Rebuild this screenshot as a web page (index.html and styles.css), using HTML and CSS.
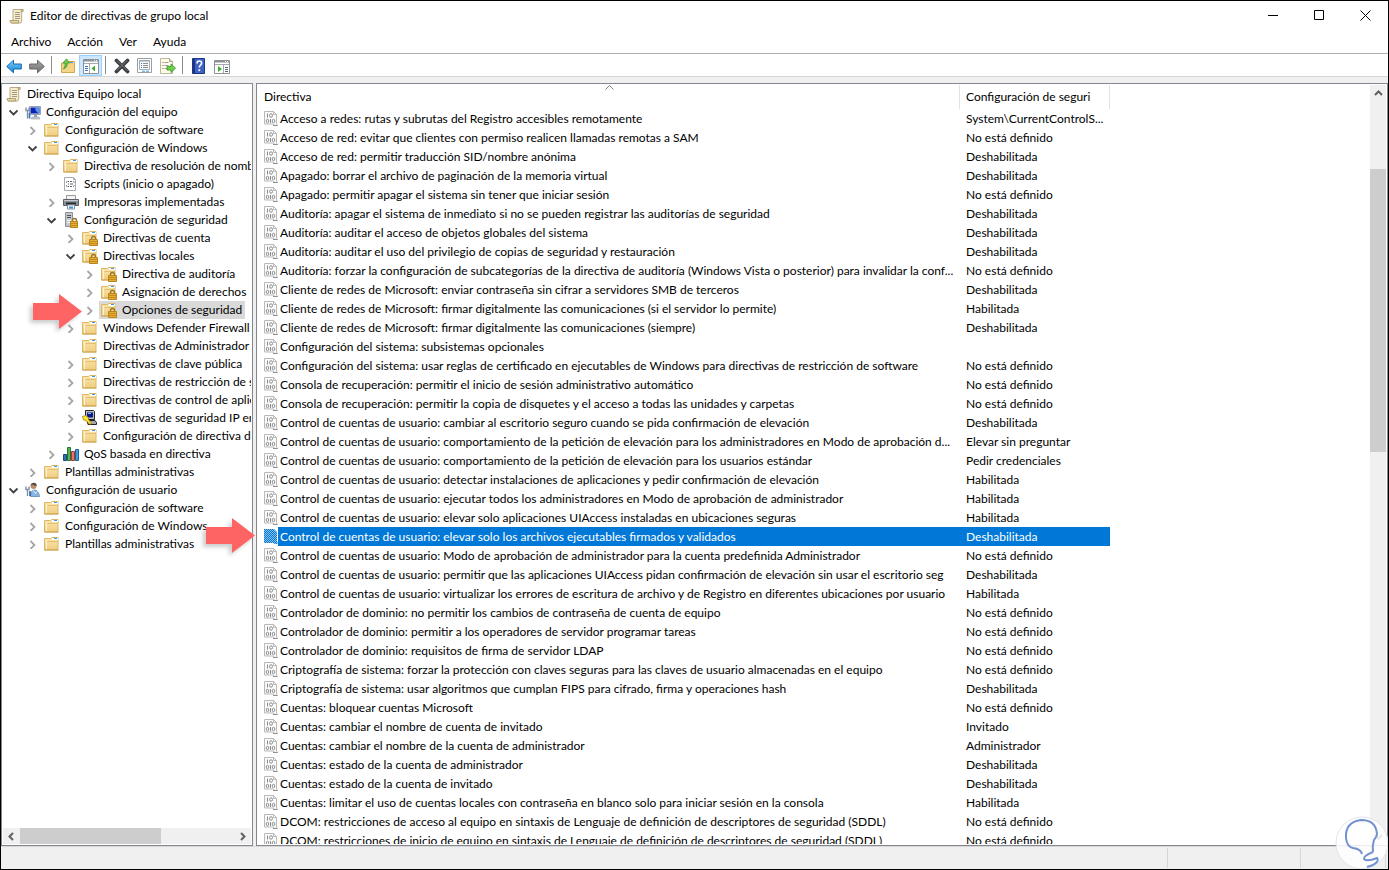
FILE: index.html
```html
<!DOCTYPE html>
<html lang="es">
<head>
  <meta charset="UTF-8" />
  <meta name="viewport" content="width=device-width, initial-scale=1" />
  <title>Editor de directivas de grupo local</title>
  <link rel="stylesheet" href="styles.css">
</head>
<body>

  <!-- ICONOS -->
  <svg class="sprite" aria-hidden="true">
    <defs>
      <symbol id="i-scroll" viewBox="0 0 16 16">
        <path d="M4 1.500h10l-1.300 2v9.500l-1 2H2.500L4 12.500z" fill="#f6ecca" stroke="#b9aa84" />
        <path d="M12 1.500h2.200v2h-2z" fill="#d9c48d" stroke="#a3926a" stroke-width=".7" />
        <path d="M1 12.500h8.500v2.500H2q-1-.7-1-2.500z" fill="#e6d7a4" stroke="#a3926a" stroke-width=".8" />
        <path d="M6 4.500h5M6 6.500h5M6 8.500h5M6 10.500h5" stroke="#a29a84" />
      </symbol>
      <linearGradient id="manila" x2="0" y2="1">
        <stop offset="0" stop-color="#fae6ae" /><stop offset="1" stop-color="#efcd80" />
      </linearGradient>
      <symbol id="i-folder" viewBox="0 0 16 16">
        <path d="M.5 2.500h6l1-1h6.500v12.500H.5z" fill="url(#manila)" stroke="#dcb766" />
        <path d="M8 2h6v2H8z" fill="#fff" />
        <path d="M10 2.500h3" stroke="#3e97dd" />
        <path d="M2.500 4v9.500" stroke="#fdf2cf" />
        <path d="M3.500 5.500h10" stroke="#e3c070" />
        <path d="M.5 14h14" stroke="#cda550" />
      </symbol>
      <symbol id="i-folder-lock" viewBox="0 0 16 16">
        <use href="#i-folder" />
        <path d="M9.500 10V8.500q0-2 2-2t2 2V10" fill="none" stroke="#9b7420" stroke-width="1.400" />
        <path d="M7.500 9.500h8v6h-8z" fill="#e5ae35" stroke="#b98420" />
        <path d="M8 11.500h7M8 13.500h7" stroke="#c48b1c" />
      </symbol>
      <symbol id="i-pc" viewBox="0 0 16 16">
        <path d="M4.500 2.500h11v8h-11z" fill="#dfe3e8" stroke="#98a1ad" />
        <path d="M5.500 3.500h9v6h-9z" fill="#0a22b4" />
        <path d="M10 3.500h4.500v6q-4-1-4.500-6z" fill="#5d93ee" />
        <path d="M7 13h7l1 2H6z" fill="#c6ccd4" stroke="#98a1ad" stroke-width=".6" />
        <path d="M9 11h3v2H9z" fill="#98a1ad" />
        <path d="M2.500 14.500V7M1 3.500v3h3v-3" fill="none" stroke="#7e92aa" stroke-width="1.400" />
        <path d="M4.500 9v5.500" stroke="#2f6fb5" stroke-width="1.600" />
      </symbol>
      <symbol id="i-user" viewBox="0 0 16 16">
        <circle cx="8.500" cy="4" r="3" fill="#b98d69" />
        <path d="M5.500 3.500q1-3 3.500-2.800t3 3q-3 0-4-1.200z" fill="#55463a" />
        <path d="M5.500 14.500q0-6.500 4-6.500t5 6.500z" fill="#86b6e2" stroke="#4a7dae" stroke-width=".7" />
        <path d="M8.500 8.500l2 3 2-2" fill="none" stroke="#e3eef8" />
        <path d="M2.500 14V8M1 4.500v3h3v-3" fill="none" stroke="#7e92aa" stroke-width="1.400" />
        <path d="M5 9v5" stroke="#2f5f95" stroke-width="1.600" />
      </symbol>
      <symbol id="i-script" viewBox="0 0 16 16">
        <path d="M1.500 1.500h9l2 2v11h-11z" fill="#fff" stroke="#a8adb2" />
        <path d="M10.500 1.500v2h2" fill="none" stroke="#a8adb2" />
        <path d="M5 5.500h1M7 5.500h2M5 8h1M7 8h3M5 10.500h1M7 10.500h2" stroke="#5b6167" />
        <path d="M3 6.500l1.500-1M11.500 6.500l-1.500-1M3 9.500l1.500 1M11.500 9.500l-1.500 1" stroke="#5b6167" />
      </symbol>
      <symbol id="i-printer" viewBox="0 0 16 16">
        <path d="M3.500 1.500h9v4h-9z" fill="#f4f4f4" stroke="#9a9a9a" />
        <path d="M.5 5.500h15v6H.5z" fill="#8d9299" stroke="#5c6167" />
        <path d="M1 6.500h14" stroke="#c6cad0" />
        <path d="M3 9.500h10" stroke="#23272c" stroke-width="2" />
        <path d="M4.500 11h7v4h-7z" fill="#fff" stroke="#8c9299" />
        <path d="M6 13.500h4" stroke="#3e97dd" stroke-width="2" />
      </symbol>
      <symbol id="i-server" viewBox="0 0 16 16">
        <path d="M2.500.500h7v14h-7z" fill="#c3c6ca" stroke="#8c9197" />
        <path d="M4 3.500h4M4 5.500h4" stroke="#4e5359" />
        <path d="M4 8.500h4M4 10.500h4" stroke="#f4f4f4" />
        <path d="M9.500 10V8.500q0-2 2-2t2 2V10" fill="none" stroke="#9b7420" stroke-width="1.400" />
        <path d="M7.500 9.500h7v6h-7z" fill="#e5ae35" stroke="#b98420" />
        <path d="M8 11.500h6M8 13.500h6" stroke="#c48b1c" />
      </symbol>
      <symbol id="i-ipsec" viewBox="0 0 16 16">
        <path d="M3.500.500h8l1 1v8h-9z" fill="#bdbdbd" stroke="#222" />
        <path d="M5 2.500h6v5H5z" fill="#0a1a8c" />
        <path d="M6 3.500h3" stroke="#7fb2f5" />
        <path d="M5 10.500h8l1.500 2v2H6z" fill="#a8a8a8" stroke="#222" />
        <path d="M.5 6.500l3-1 3 2v2l3 3.500-1.500 1.500-4-4-2.500-.5z" fill="#ffe13a" stroke="#8f7500" stroke-width=".7" />
      </symbol>
      <symbol id="i-qos" viewBox="0 0 16 16">
        <path d="M.5 8.500h3v6h-3z" fill="#2f6fb5" stroke="#1b4879" />
        <path d="M4.500 1.500h3v13h-3z" fill="#4fb559" stroke="#24752d" />
        <path d="M8.500 5.500h3v9h-3z" fill="#ec7468" stroke="#a4362c" />
        <path d="M12.500 3.500h3v11h-3z" fill="#3aa1e0" stroke="#1b6397" />
      </symbol>
      <symbol id="i-policy" viewBox="0 0 14 15">
        <path d="M.5.500h9l3 3V12q0 2 1 2.500H11L9 13H.5z" fill="#fbfbfb" stroke="#b9b9b9" />
        <path d="M9.500.500v3h3" fill="none" stroke="#b9b9b9" />
        <path d="M3.500 2.500v4M6.500 8v4" stroke="#8c8c8c" />
        <ellipse cx="7" cy="4.500" rx="1.500" ry="1.700" fill="none" stroke="#8c8c8c" />
        <ellipse cx="3.500" cy="10" rx="1.300" ry="1.700" fill="none" stroke="#8c8c8c" />
        <ellipse cx="9.500" cy="10" rx="1.300" ry="1.700" fill="none" stroke="#8c8c8c" />
        <path d="M9 14.500h4.500" stroke="#909090" />
      </symbol>
      <pattern id="dither" width="2" height="2" patternUnits="userSpaceOnUse">
        <rect width="2" height="2" fill="#8fc0ea" />
        <path d="M0 0h1v1H0zM1 1h1v1H1z" fill="#0078d7" />
      </pattern>
      <symbol id="i-policy-sel" viewBox="0 0 14 15">
        <path d="M0 0h10l3 3v9l1 3h-3l-2-1H0z" fill="url(#dither)" />
      </symbol>
      <linearGradient id="blue" x2="0" y2="1">
        <stop offset="0" stop-color="#7cd0f8" /><stop offset="1" stop-color="#1583d3" />
      </linearGradient>
      <linearGradient id="gray" x2="0" y2="1">
        <stop offset="0" stop-color="#a8a8a8" /><stop offset="1" stop-color="#707070" />
      </linearGradient>
      <symbol id="i-back" viewBox="0 0 16 16">
        <path d="M.7 8.500L7.500 2.200v3.800h7.800v5H7.500v3.800z" fill="url(#blue)" stroke="#1668b0" />
      </symbol>
      <symbol id="i-forward" viewBox="0 0 16 16">
        <path d="M15.300 8.500L8.500 2.200v3.800H.7v5h7.800v3.800z" fill="url(#gray)" stroke="#666" />
      </symbol>
      <symbol id="i-up" viewBox="0 0 16 16">
        <path d="M1.500 5h5l1-1.500h7V14.500h-13z" fill="#f2cf78" stroke="#cfa850" />
        <path d="M8 4.500h6" stroke="#fff" />
        <path d="M10 4.500h3" stroke="#3e97dd" />
        <path d="M2 7h12v7H2z" fill="#f4d488" />
        <path d="M3.500 11Q7.500 10 7.500 5h2.200L6.500.8 3 5h2.300Q5.500 8 3.500 11z" fill="#6fc94e" stroke="#3c9a28" stroke-width=".8" />
      </symbol>
      <symbol id="i-tree" viewBox="0 0 16 16">
        <path d="M.5 1.500h15v14H.5z" fill="#fff" stroke="#8c9197" />
        <path d="M1 2.500h14" stroke="#8c9197" stroke-width="2" />
        <path d="M11 2.500h1M13 2.500h1" stroke="#fff" />
        <path d="M1 5.500h14M6.500 6v9" stroke="#a4a9ae" />
        <path d="M2 8.500h3M2 10.500h3M2 12.500h3" stroke="#3c74b4" />
        <path d="M12 7.500v6L8.500 10.500z" fill="#3dab35" />
      </symbol>
      <symbol id="i-delete" viewBox="0 0 16 16">
        <path d="M2.500 2.500l11 11M13.500 2.500l-11 11" stroke="#3c3f42" stroke-width="3.800" stroke-linecap="round" />
        <path d="M3 2.500l10.500 10.500M13 2.500L3 12.500" stroke="#74787c" stroke-width="1" />
      </symbol>
      <symbol id="i-props" viewBox="0 0 16 16">
        <path d="M.5.500h14v14H.5z" fill="#fff" stroke="#9aa0a6" />
        <path d="M2.500 2.500h10v9h-10z" fill="#fafafa" stroke="#a9b0b7" />
        <path d="M2 3h11" stroke="#9aa0a6" />
        <path d="M4 5.500h1M4 7.500h1M4 9.500h1" stroke="#2c7fd0" />
        <path d="M6 5.500h5M6 7.500h5M6 9.500h5" stroke="#8a9097" />
        <path d="M5 13.200h3M9 13.200h3" stroke="#3e97dd" />
      </symbol>
      <symbol id="i-export" viewBox="0 0 16 16">
        <path d="M.5.500h9l3 3v12H.5z" fill="#fffbe4" stroke="#b8b6a0" />
        <path d="M9.500.500v3h3" fill="#e8e2bb" stroke="#a8a68e" />
        <path d="M2.500 4.500h1M2.500 7.500h1M2.500 10.500h1" stroke="#5b6167" />
        <path d="M4.500 4.500h4M4.500 7.500h4M4.500 10.500h4" stroke="#9b96a8" />
        <path d="M7 8.500h4V6l4.500 4.200L11 14.500V12H7z" fill="#6fd04e" stroke="#2f9620" stroke-width=".8" />
      </symbol>
      <symbol id="i-help" viewBox="0 0 16 16">
        <path d="M1.500.500h12v15h-12z" fill="#3f63c4" stroke="#1d3583" />
        <path d="M2 1h2v14H2z" fill="#1d3583" />
        <path d="M6 5.500q0-2.500 2.300-2.500t2.300 2q0 1.500-1.300 2.300-1 .7-1 2.200" fill="none" stroke="#fff" stroke-width="1.600" />
        <path d="M7.400 11.300h1.800v1.800H7.400z" fill="#fff" />
      </symbol>
      <symbol id="i-pane" viewBox="0 0 16 16">
        <path d="M.5 2.500h15v13H.5z" fill="#fff" stroke="#8c9197" />
        <path d="M1 3.500h14" stroke="#8c9197" stroke-width="2" />
        <path d="M11 3.500h1M13 3.500h1" stroke="#fff" />
        <path d="M1 6.500h14M9.500 7v8" stroke="#a4a9ae" />
        <path d="M11 9.500h3M11 11.500h3M11 13.500h3" stroke="#5b6167" />
        <path d="M4 8v6l4-3z" fill="#3dab35" />
      </symbol>
      <symbol id="i-closed" viewBox="0 0 10 10">
        <path d="M2.500 2l4 4-4 4" fill="none" stroke="#a6a6a6" stroke-width="1.800" />
      </symbol>
      <symbol id="i-open" viewBox="0 0 10 10">
        <path d="M.5 3.500l4 4 4-4" fill="none" stroke="#404040" stroke-width="1.800" />
      </symbol>
      <symbol id="i-arrow" viewBox="0 0 49 35">
        <path d="M0 9h26V0l23 17.500L26 35v-9H0z" fill="#ff6464" />
      </symbol>
    </defs>
  </svg>

  <div class="window">
    <header class="titlebar">
      <svg class="icon"><use href="#i-scroll" /></svg>
      <h1 class="title">Editor de directivas de grupo local</h1>
      <div class="caption">
        <button class="caption-btn" aria-label="Minimizar"><svg viewBox="0 0 11 11"><path d="M0 5.500h10" /></svg></button>
        <button class="caption-btn" aria-label="Maximizar"><svg viewBox="0 0 11 11"><path d="M.5.500h9v9h-9z" /></svg></button>
        <button class="caption-btn" aria-label="Cerrar"><svg viewBox="0 0 11 11"><path d="M.5.500l10 10M10.500.500l-10 10" /></svg></button>
      </div>
    </header>

    <nav class="menubar">
      <button class="menu">Archivo</button>
      <button class="menu">Acción</button>
      <button class="menu">Ver</button>
      <button class="menu">Ayuda</button>
    </nav>

    <div class="toolbar">
      <button class="tool" aria-label="Atrás"><svg class="icon"><use href="#i-back" /></svg></button>
      <button class="tool" aria-label="Adelante"><svg class="icon"><use href="#i-forward" /></svg></button>
      <span class="tool-sep"></span>
      <button class="tool" aria-label="Subir un nivel"><svg class="icon"><use href="#i-up" /></svg></button>
      <button class="tool active" aria-label="Mostrar árbol"><svg class="icon"><use href="#i-tree" /></svg></button>
      <span class="tool-sep"></span>
      <button class="tool" aria-label="Eliminar"><svg class="icon"><use href="#i-delete" /></svg></button>
      <button class="tool" aria-label="Propiedades"><svg class="icon"><use href="#i-props" /></svg></button>
      <button class="tool" aria-label="Exportar lista"><svg class="icon"><use href="#i-export" /></svg></button>
      <span class="tool-sep"></span>
      <button class="tool" aria-label="Ayuda"><svg class="icon"><use href="#i-help" /></svg></button>
      <button class="tool" aria-label="Mostrar panel de acciones"><svg class="icon"><use href="#i-pane" /></svg></button>
    </div>

    <main class="panes">
      <!-- ARBOL -->
      <section class="pane tree-pane">
        <ul class="tree">
          <li>
            <div class="row"><span class="node"><svg class="icon"><use href="#i-scroll" /></svg>Directiva Equipo local</span></div>
            <ul class="top">
              <li>
                <div class="row"><button class="twisty" aria-label="Contraer"><svg><use href="#i-open" /></svg></button><span class="node"><svg class="icon"><use href="#i-pc" /></svg>Configuración del equipo</span></div>
                <ul>
                  <li><div class="row"><button class="twisty" aria-label="Expandir"><svg><use href="#i-closed" /></svg></button><span class="node"><svg class="icon"><use href="#i-folder" /></svg>Configuración de software</span></div></li>
                  <li>
                    <div class="row"><button class="twisty" aria-label="Contraer"><svg><use href="#i-open" /></svg></button><span class="node"><svg class="icon"><use href="#i-folder" /></svg>Configuración de Windows</span></div>
                    <ul>
                      <li><div class="row"><button class="twisty" aria-label="Expandir"><svg><use href="#i-closed" /></svg></button><span class="node"><svg class="icon"><use href="#i-folder" /></svg>Directiva de resolución de nombres</span></div></li>
                      <li><div class="row leaf"><span class="node"><svg class="icon"><use href="#i-script" /></svg>Scripts (inicio o apagado)</span></div></li>
                      <li><div class="row"><button class="twisty" aria-label="Expandir"><svg><use href="#i-closed" /></svg></button><span class="node"><svg class="icon"><use href="#i-printer" /></svg>Impresoras implementadas</span></div></li>
                      <li>
                        <div class="row"><button class="twisty" aria-label="Contraer"><svg><use href="#i-open" /></svg></button><span class="node"><svg class="icon"><use href="#i-server" /></svg>Configuración de seguridad</span></div>
                        <ul>
                          <li><div class="row"><button class="twisty" aria-label="Expandir"><svg><use href="#i-closed" /></svg></button><span class="node"><svg class="icon"><use href="#i-folder-lock" /></svg>Directivas de cuenta</span></div></li>
                          <li>
                            <div class="row"><button class="twisty" aria-label="Contraer"><svg><use href="#i-open" /></svg></button><span class="node"><svg class="icon"><use href="#i-folder-lock" /></svg>Directivas locales</span></div>
                            <ul>
                              <li><div class="row"><button class="twisty" aria-label="Expandir"><svg><use href="#i-closed" /></svg></button><span class="node"><svg class="icon"><use href="#i-folder-lock" /></svg>Directiva de auditoría</span></div></li>
                              <li><div class="row"><button class="twisty" aria-label="Expandir"><svg><use href="#i-closed" /></svg></button><span class="node"><svg class="icon"><use href="#i-folder-lock" /></svg>Asignación de derechos</span></div></li>
                              <li><div class="row"><button class="twisty" aria-label="Expandir"><svg><use href="#i-closed" /></svg></button><span class="node current"><svg class="icon"><use href="#i-folder-lock" /></svg>Opciones de seguridad</span></div></li>
                            </ul>
                          </li>
                          <li><div class="row"><button class="twisty" aria-label="Expandir"><svg><use href="#i-closed" /></svg></button><span class="node"><svg class="icon"><use href="#i-folder" /></svg>Windows Defender Firewall con</span></div></li>
                          <li><div class="row leaf"><span class="node"><svg class="icon"><use href="#i-folder" /></svg>Directivas de Administrador</span></div></li>
                          <li><div class="row"><button class="twisty" aria-label="Expandir"><svg><use href="#i-closed" /></svg></button><span class="node"><svg class="icon"><use href="#i-folder" /></svg>Directivas de clave pública</span></div></li>
                          <li><div class="row"><button class="twisty" aria-label="Expandir"><svg><use href="#i-closed" /></svg></button><span class="node"><svg class="icon"><use href="#i-folder" /></svg>Directivas de restricción de software</span></div></li>
                          <li><div class="row"><button class="twisty" aria-label="Expandir"><svg><use href="#i-closed" /></svg></button><span class="node"><svg class="icon"><use href="#i-folder" /></svg>Directivas de control de aplicaciones</span></div></li>
                          <li><div class="row"><button class="twisty" aria-label="Expandir"><svg><use href="#i-closed" /></svg></button><span class="node"><svg class="icon"><use href="#i-ipsec" /></svg>Directivas de seguridad IP en</span></div></li>
                          <li><div class="row"><button class="twisty" aria-label="Expandir"><svg><use href="#i-closed" /></svg></button><span class="node"><svg class="icon"><use href="#i-folder" /></svg>Configuración de directiva de</span></div></li>
                        </ul>
                      </li>
                      <li><div class="row"><button class="twisty" aria-label="Expandir"><svg><use href="#i-closed" /></svg></button><span class="node"><svg class="icon"><use href="#i-qos" /></svg>QoS basada en directiva</span></div></li>
                    </ul>
                  </li>
                  <li><div class="row"><button class="twisty" aria-label="Expandir"><svg><use href="#i-closed" /></svg></button><span class="node"><svg class="icon"><use href="#i-folder" /></svg>Plantillas administrativas</span></div></li>
                </ul>
              </li>
              <li>
                <div class="row"><button class="twisty" aria-label="Contraer"><svg><use href="#i-open" /></svg></button><span class="node"><svg class="icon"><use href="#i-user" /></svg>Configuración de usuario</span></div>
                <ul>
                  <li><div class="row"><button class="twisty" aria-label="Expandir"><svg><use href="#i-closed" /></svg></button><span class="node"><svg class="icon"><use href="#i-folder" /></svg>Configuración de software</span></div></li>
                  <li><div class="row"><button class="twisty" aria-label="Expandir"><svg><use href="#i-closed" /></svg></button><span class="node"><svg class="icon"><use href="#i-folder" /></svg>Configuración de Windows</span></div></li>
                  <li><div class="row"><button class="twisty" aria-label="Expandir"><svg><use href="#i-closed" /></svg></button><span class="node"><svg class="icon"><use href="#i-folder" /></svg>Plantillas administrativas</span></div></li>
                </ul>
              </li>
            </ul>
          </li>
        </ul>
        <div class="scroll-h">
          <button class="scroll-btn" aria-label="Izquierda"><svg viewBox="0 0 9 9"><path d="M6 1L2.500 4.500 6 8" /></svg></button>
          <div class="track-h"><div class="thumb-h"></div></div>
          <button class="scroll-btn" aria-label="Derecha"><svg viewBox="0 0 9 9"><path d="M3 1l3.500 3.500L3 8" /></svg></button>
        </div>
      </section>

      <!-- LISTA DE DIRECTIVAS -->
      <section class="pane list-pane">
        <div class="list">
          <table class="policies">
            <colgroup><col class="col-name"><col class="col-value"></colgroup>
            <thead>
              <tr>
                <th>Directiva<svg class="sort" viewBox="0 0 9 5"><path d="M.5 4.500l4-4 4 4" /></svg></th>
                <th>Configuración de seguri</th>
              </tr>
            </thead>
            <tbody>
              <tr><td><svg><use href="#i-policy" /></svg><span>Acceso a redes: rutas y subrutas del Registro accesibles remotamente</span></td><td>System\CurrentControlS...</td></tr>
              <tr><td><svg><use href="#i-policy" /></svg><span>Acceso de red: evitar que clientes con permiso realicen llamadas remotas a SAM</span></td><td>No está definido</td></tr>
              <tr><td><svg><use href="#i-policy" /></svg><span>Acceso de red: permitir traducción SID/nombre anónima</span></td><td>Deshabilitada</td></tr>
              <tr><td><svg><use href="#i-policy" /></svg><span>Apagado: borrar el archivo de paginación de la memoria virtual</span></td><td>Deshabilitada</td></tr>
              <tr><td><svg><use href="#i-policy" /></svg><span>Apagado: permitir apagar el sistema sin tener que iniciar sesión</span></td><td>No está definido</td></tr>
              <tr><td><svg><use href="#i-policy" /></svg><span>Auditoría: apagar el sistema de inmediato si no se pueden registrar las auditorías de seguridad</span></td><td>Deshabilitada</td></tr>
              <tr><td><svg><use href="#i-policy" /></svg><span>Auditoría: auditar el acceso de objetos globales del sistema</span></td><td>Deshabilitada</td></tr>
              <tr><td><svg><use href="#i-policy" /></svg><span>Auditoría: auditar el uso del privilegio de copias de seguridad y restauración</span></td><td>Deshabilitada</td></tr>
              <tr><td><svg><use href="#i-policy" /></svg><span>Auditoría: forzar la configuración de subcategorías de la directiva de auditoría (Windows Vista o posterior) para invalidar la conf...</span></td><td>No está definido</td></tr>
              <tr><td><svg><use href="#i-policy" /></svg><span>Cliente de redes de Microsoft: enviar contraseña sin cifrar a servidores SMB de terceros</span></td><td>Deshabilitada</td></tr>
              <tr><td><svg><use href="#i-policy" /></svg><span>Cliente de redes de Microsoft: firmar digitalmente las comunicaciones (si el servidor lo permite)</span></td><td>Habilitada</td></tr>
              <tr><td><svg><use href="#i-policy" /></svg><span>Cliente de redes de Microsoft: firmar digitalmente las comunicaciones (siempre)</span></td><td>Deshabilitada</td></tr>
              <tr><td><svg><use href="#i-policy" /></svg><span>Configuración del sistema: subsistemas opcionales</span></td><td></td></tr>
              <tr><td><svg><use href="#i-policy" /></svg><span>Configuración del sistema: usar reglas de certificado en ejecutables de Windows para directivas de restricción de software</span></td><td>No está definido</td></tr>
              <tr><td><svg><use href="#i-policy" /></svg><span>Consola de recuperación: permitir el inicio de sesión administrativo automático</span></td><td>No está definido</td></tr>
              <tr><td><svg><use href="#i-policy" /></svg><span>Consola de recuperación: permitir la copia de disquetes y el acceso a todas las unidades y carpetas</span></td><td>No está definido</td></tr>
              <tr><td><svg><use href="#i-policy" /></svg><span>Control de cuentas de usuario: cambiar al escritorio seguro cuando se pida confirmación de elevación</span></td><td>Deshabilitada</td></tr>
              <tr><td><svg><use href="#i-policy" /></svg><span>Control de cuentas de usuario: comportamiento de la petición de elevación para los administradores en Modo de aprobación d...</span></td><td>Elevar sin preguntar</td></tr>
              <tr><td><svg><use href="#i-policy" /></svg><span>Control de cuentas de usuario: comportamiento de la petición de elevación para los usuarios estándar</span></td><td>Pedir credenciales</td></tr>
              <tr><td><svg><use href="#i-policy" /></svg><span>Control de cuentas de usuario: detectar instalaciones de aplicaciones y pedir confirmación de elevación</span></td><td>Habilitada</td></tr>
              <tr><td><svg><use href="#i-policy" /></svg><span>Control de cuentas de usuario: ejecutar todos los administradores en Modo de aprobación de administrador</span></td><td>Habilitada</td></tr>
              <tr><td><svg><use href="#i-policy" /></svg><span>Control de cuentas de usuario: elevar solo aplicaciones UIAccess instaladas en ubicaciones seguras</span></td><td>Habilitada</td></tr>
              <tr class="selected"><td><svg><use href="#i-policy-sel" /></svg><span>Control de cuentas de usuario: elevar solo los archivos ejecutables firmados y validados</span></td><td>Deshabilitada</td></tr>
              <tr><td><svg><use href="#i-policy" /></svg><span>Control de cuentas de usuario: Modo de aprobación de administrador para la cuenta predefinida Administrador</span></td><td>No está definido</td></tr>
              <tr><td><svg><use href="#i-policy" /></svg><span>Control de cuentas de usuario: permitir que las aplicaciones UIAccess pidan confirmación de elevación sin usar el escritorio seg</span></td><td>Deshabilitada</td></tr>
              <tr><td><svg><use href="#i-policy" /></svg><span>Control de cuentas de usuario: virtualizar los errores de escritura de archivo y de Registro en diferentes ubicaciones por usuario</span></td><td>Habilitada</td></tr>
              <tr><td><svg><use href="#i-policy" /></svg><span>Controlador de dominio: no permitir los cambios de contraseña de cuenta de equipo</span></td><td>No está definido</td></tr>
              <tr><td><svg><use href="#i-policy" /></svg><span>Controlador de dominio: permitir a los operadores de servidor programar tareas</span></td><td>No está definido</td></tr>
              <tr><td><svg><use href="#i-policy" /></svg><span>Controlador de dominio: requisitos de firma de servidor LDAP</span></td><td>No está definido</td></tr>
              <tr><td><svg><use href="#i-policy" /></svg><span>Criptografía de sistema: forzar la protección con claves seguras para las claves de usuario almacenadas en el equipo</span></td><td>No está definido</td></tr>
              <tr><td><svg><use href="#i-policy" /></svg><span>Criptografía de sistema: usar algoritmos que cumplan FIPS para cifrado, firma y operaciones hash</span></td><td>Deshabilitada</td></tr>
              <tr><td><svg><use href="#i-policy" /></svg><span>Cuentas: bloquear cuentas Microsoft</span></td><td>No está definido</td></tr>
              <tr><td><svg><use href="#i-policy" /></svg><span>Cuentas: cambiar el nombre de cuenta de invitado</span></td><td>Invitado</td></tr>
              <tr><td><svg><use href="#i-policy" /></svg><span>Cuentas: cambiar el nombre de la cuenta de administrador</span></td><td>Administrador</td></tr>
              <tr><td><svg><use href="#i-policy" /></svg><span>Cuentas: estado de la cuenta de administrador</span></td><td>Deshabilitada</td></tr>
              <tr><td><svg><use href="#i-policy" /></svg><span>Cuentas: estado de la cuenta de invitado</span></td><td>Deshabilitada</td></tr>
              <tr><td><svg><use href="#i-policy" /></svg><span>Cuentas: limitar el uso de cuentas locales con contraseña en blanco solo para iniciar sesión en la consola</span></td><td>Habilitada</td></tr>
              <tr><td><svg><use href="#i-policy" /></svg><span>DCOM: restricciones de acceso al equipo en sintaxis de Lenguaje de definición de descriptores de seguridad (SDDL)</span></td><td>No está definido</td></tr>
              <tr><td><svg><use href="#i-policy" /></svg><span>DCOM: restricciones de inicio de equipo en sintaxis de Lenguaje de definición de descriptores de seguridad (SDDL)</span></td><td>No está definido</td></tr>
            </tbody>
          </table>
        </div>
        <div class="scroll-v">
          <button class="scroll-btn" aria-label="Arriba"><svg viewBox="0 0 9 9"><path d="M1 6l3.500-3.500L8 6" /></svg></button>
          <div class="track-v"><div class="thumb-v"></div></div>
          <button class="scroll-btn" aria-label="Abajo"><svg viewBox="0 0 9 9"><path d="M1 3l3.500 3.500L8 3" /></svg></button>
        </div>
      </section>
    </main>

    <footer class="statusbar">
      <span class="status-main"></span>
      <span class="status-mid"></span>
      <span class="status-end"></span>
    </footer>

    <!-- Marcas sobre la ventana -->
    <svg class="pointer pointer-tree"><use href="#i-arrow" /></svg>
    <svg class="pointer pointer-list"><use href="#i-arrow" /></svg>
    <svg class="bulb" viewBox="0 0 54 54">
      <circle cx="27" cy="27" r="26" fill="#fff" fill-opacity=".85" stroke="#dfe5ee" />
      <path d="M27 38Q26 33 18 32Q12 31 11 22Q10 6 26 4Q41 4 42 18Q42 20 39 24Q37 30 38 36" fill="none" stroke="#7391cf" stroke-width="2" />
      <path d="M38 36Q28 40 29 43Q32 46 42 42Q45 45 38 49L32 51" fill="none" stroke="#7391cf" stroke-width="2" />
    </svg>
  </div>

</body>
</html>
```

FILE: styles.css
```css
* { margin: 0; padding: 0; box-sizing: border-box; }

html, body {
  height: 100%;
  overflow: hidden;
}

body {
  background: #f0f0f0;
  color: #000;
  font-family: Lato, 'Open Sans', sans-serif;
  font-size: 12px;
  line-height: 18px;
}

button {
  background: none;
  border: 0;
  color: inherit;
  font: inherit;
}

ul { list-style: none; }

.sprite {
  position: absolute;
  width: 0;
  height: 0;
}

.icon {
  flex: none;
  width: 16px;
  height: 16px;
}

.window {
  position: relative;
  display: flex;
  flex-direction: column;
  height: 100vh;
  border: 1px solid #000;
  background: #f0f0f0;
  overflow: hidden;
}

/* Barra de titulo */
.titlebar {
  display: flex;
  align-items: center;
  height: 30px;
  padding-left: 8px;
  background: #fff;
}

.title {
  flex: 1;
  margin-left: 5px;
  font-size: 12px;
  font-weight: 400;
}

.caption {
  display: flex;
  align-self: flex-start;
}

.caption-btn {
  display: flex;
  align-items: center;
  justify-content: center;
  width: 46px;
  height: 28px;
}

.caption-btn svg {
  width: 11px;
  height: 11px;
  fill: none;
  stroke: #000;
}

/* Menu */
.menubar {
  display: flex;
  height: 23px;
  padding-left: 2px;
  border-bottom: 1px solid #b0b0b0;
  background: #fff;
}

.menu { padding: 0 8px; }

/* Barra de herramientas */
.toolbar {
  display: flex;
  align-items: flex-end;
  height: 23px;
  padding-left: 1px;
  border-bottom: 1px solid #d7d7d7;
  background: #fff;
}

.tool {
  display: flex;
  align-items: center;
  justify-content: center;
  width: 23px;
  height: 21px;
}

.tool.active {
  border: 1px solid #99d1ff;
  background: #cce8ff;
}

.tool-sep {
  width: 1px;
  height: 18px;
  margin: 0 4px 2px 3px;
  background: #8d8d8d;
}

/* Paneles */
.panes {
  flex: 1;
  display: flex;
  gap: 3px;
  min-height: 0;
  padding-top: 6px;
}

.pane {
  display: flex;
  border: 1px solid #828790;
  background: #fff;
  padding: 1px;
}

.tree-pane {
  flex: none;
  flex-direction: column;
  width: 252px;
}

.tree {
  flex: 1;
  min-height: 0;
  padding-left: 1px;
  overflow: hidden;
}

.tree ul { padding-left: 19px; }
.tree ul.top { padding-left: 0; }

.row {
  display: flex;
  height: 18px;
  white-space: nowrap;
}

.row.leaf { padding-left: 19px; }

.twisty {
  display: flex;
  flex: none;
  align-items: center;
  justify-content: center;
  width: 19px;
}

.twisty svg {
  width: 10px;
  height: 10px;
}

.node {
  display: flex;
  flex: none;
  align-items: center;
  gap: 5px;
  padding: 0 3px 0 2px;
}

.node.current { background: #d9d9d9; }

.list-pane {
  flex: 1;
  min-width: 0;
}

.list {
  flex: 1;
  min-width: 0;
  overflow: hidden;
}

.policies {
  border-collapse: separate;
  border-spacing: 0;
  table-layout: fixed;
  width: 852px;
}

.col-name { width: 702px; }
.col-value { width: 150px; }

.policies th {
  position: relative;
  height: 24px;
  padding-left: 6px;
  border-right: 1px solid #e2e2e2;
  font-weight: 400;
  text-align: left;
}

.sort {
  position: absolute;
  top: 0;
  left: calc(50% - 4px);
  width: 9px;
  height: 5px;
  fill: none;
  stroke: #7a7a7a;
}

.policies td {
  height: 19px;
  padding-left: 6px;
  overflow: hidden;
  white-space: nowrap;
}

.policies td:first-child { display: flex; align-items: center; }

.policies td svg {
  flex: none;
  width: 14px;
  height: 15px;
}

.policies td span {
  flex: 1;
  padding-left: 2px;
  line-height: 19px;
}

.selected td + td,
.selected span {
  background: #0078d7;
  color: #fff;
}

/* Barras de desplazamiento */
.scroll-h,
.scroll-v {
  display: flex;
  flex: none;
  background: #f0f0f0;
}

.scroll-h { height: 16px; }

.scroll-v {
  flex-direction: column;
  width: 16px;
}

.scroll-btn {
  display: flex;
  flex: none;
  align-items: center;
  justify-content: center;
  width: 17px;
  height: 16px;
}

.scroll-btn svg {
  width: 9px;
  height: 9px;
  fill: none;
  stroke: #606060;
  stroke-width: 2;
}

.track-h,
.track-v { flex: 1; }

.thumb-h {
  width: 66%;
  height: 100%;
  background: #cdcdcd;
}

.track-v { padding-top: 68px; }

.thumb-v {
  height: 43%;
  background: #cdcdcd;
}

/* Barra de estado */
.statusbar {
  display: flex;
  height: 23px;
  padding: 1px 2px 1px 0;
  border-top: 1px solid #d7d7d7;
}

.status-main { flex: 1; }

.status-mid,
.status-end { border-left: 1px solid #d7d7d7; }

.status-mid { width: 133px; }

.status-end {
  width: 86px;
  border-right: 1px solid #d7d7d7;
}

/* Marcas */
.pointer {
  position: absolute;
  width: 49px;
  height: 35px;
  filter: drop-shadow(-3px 3px 2px rgba(0, 0, 0, 0.2));
}

.pointer-tree { top: 293px; left: 32px; }
.pointer-list { top: 517px; left: 205px; }

.bulb {
  position: absolute;
  right: -1px;
  bottom: -1px;
  width: 54px;
  height: 54px;
}
```
